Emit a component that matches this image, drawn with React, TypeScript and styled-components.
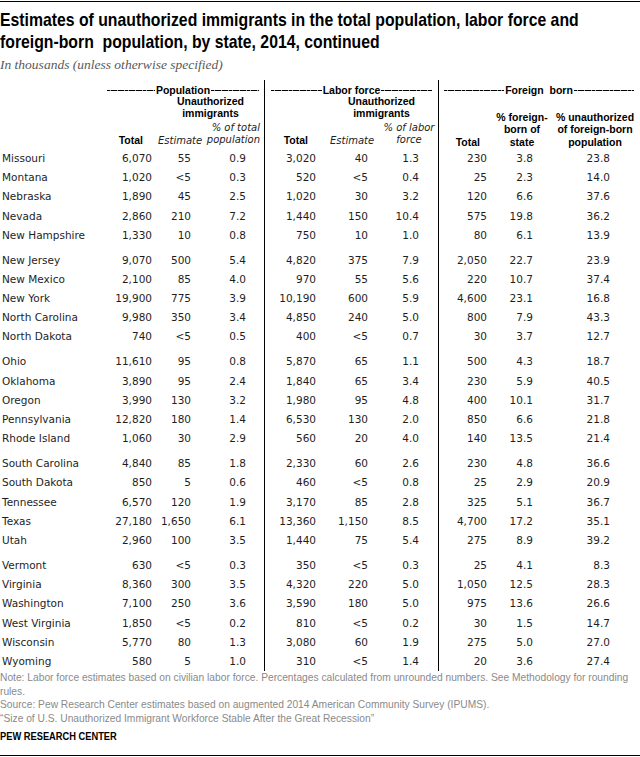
import React from 'react';
import styled, { createGlobalStyle } from 'styled-components';

const GlobalStyle = createGlobalStyle`
  html, body { margin: 0; padding: 0; background: #fff; }
  body { font-family: "DejaVu Sans", Verdana, sans-serif; }
`;

const COLS = '105px 47px 39px 73px 52px 52px 70px 49px 46px 107px';

type StateRow = { name: string; v: string[] };

const groups: StateRow[][] = [
  [
    { name: 'Missouri', v: ['6,070', '55', '0.9', '3,020', '40', '1.3', '230', '3.8', '23.8'] },
    { name: 'Montana', v: ['1,020', '<5', '0.3', '520', '<5', '0.4', '25', '2.3', '14.0'] },
    { name: 'Nebraska', v: ['1,890', '45', '2.5', '1,020', '30', '3.2', '120', '6.6', '37.6'] },
    { name: 'Nevada', v: ['2,860', '210', '7.2', '1,440', '150', '10.4', '575', '19.8', '36.2'] },
    { name: 'New Hampshire', v: ['1,330', '10', '0.8', '750', '10', '1.0', '80', '6.1', '13.9'] },
  ],
  [
    { name: 'New Jersey', v: ['9,070', '500', '5.4', '4,820', '375', '7.9', '2,050', '22.7', '23.9'] },
    { name: 'New Mexico', v: ['2,100', '85', '4.0', '970', '55', '5.6', '220', '10.7', '37.4'] },
    { name: 'New York', v: ['19,900', '775', '3.9', '10,190', '600', '5.9', '4,600', '23.1', '16.8'] },
    { name: 'North Carolina', v: ['9,980', '350', '3.4', '4,850', '240', '5.0', '800', '7.9', '43.3'] },
    { name: 'North Dakota', v: ['740', '<5', '0.5', '400', '<5', '0.7', '30', '3.7', '12.7'] },
  ],
  [
    { name: 'Ohio', v: ['11,610', '95', '0.8', '5,870', '65', '1.1', '500', '4.3', '18.7'] },
    { name: 'Oklahoma', v: ['3,890', '95', '2.4', '1,840', '65', '3.4', '230', '5.9', '40.5'] },
    { name: 'Oregon', v: ['3,990', '130', '3.2', '1,980', '95', '4.8', '400', '10.1', '31.7'] },
    { name: 'Pennsylvania', v: ['12,820', '180', '1.4', '6,530', '130', '2.0', '850', '6.6', '21.8'] },
    { name: 'Rhode Island', v: ['1,060', '30', '2.9', '560', '20', '4.0', '140', '13.5', '21.4'] },
  ],
  [
    { name: 'South Carolina', v: ['4,840', '85', '1.8', '2,330', '60', '2.6', '230', '4.8', '36.6'] },
    { name: 'South Dakota', v: ['850', '5', '0.6', '460', '<5', '0.8', '25', '2.9', '20.9'] },
    { name: 'Tennessee', v: ['6,570', '120', '1.9', '3,170', '85', '2.8', '325', '5.1', '36.7'] },
    { name: 'Texas', v: ['27,180', '1,650', '6.1', '13,360', '1,150', '8.5', '4,700', '17.2', '35.1'] },
    { name: 'Utah', v: ['2,960', '100', '3.5', '1,440', '75', '5.4', '275', '8.9', '39.2'] },
  ],
  [
    { name: 'Vermont', v: ['630', '<5', '0.3', '350', '<5', '0.3', '25', '4.1', '8.3'] },
    { name: 'Virginia', v: ['8,360', '300', '3.5', '4,320', '220', '5.0', '1,050', '12.5', '28.3'] },
    { name: 'Washington', v: ['7,100', '250', '3.6', '3,590', '180', '5.0', '975', '13.6', '26.6'] },
    { name: 'West Virginia', v: ['1,850', '<5', '0.2', '810', '<5', '0.2', '30', '1.5', '14.7'] },
    { name: 'Wisconsin', v: ['5,770', '80', '1.3', '3,080', '60', '1.9', '275', '5.0', '27.0'] },
    { name: 'Wyoming', v: ['580', '5', '1.0', '310', '<5', '1.4', '20', '3.6', '27.4'] },
  ],
];

// right padding for each numeric column (cols 2..10)
const NUM_PAD = [0, 0, 18, 0, 0, 19, 0, 0, 30];
const RULE_COLS = [3, 6];

const Page = styled.div`
  width: 640px;
  height: 757px;
  box-sizing: border-box;
  padding-top: 1px;
  display: flex;
  flex-direction: column;
  overflow: hidden;
  background: #fff;
`;

const Rule = styled.div<{ $bottom?: boolean }>`
  height: 1px;
  background: #000;
  flex: none;
  margin-top: ${(p) => (p.$bottom ? 'auto' : '0')};
  margin-bottom: ${(p) => (p.$bottom ? '1px' : '0')};
`;

const Title = styled.h1`
  margin: 7px 0 0 0;
  font-family: "Liberation Sans", Arial, sans-serif;
  font-weight: 700;
  font-size: 18.5px;
  line-height: 22px;
  color: #000;
`;

const Squeezed = styled.span<{ $scale: number }>`
  display: block;
  white-space: nowrap;
  transform-origin: left center;
  transform: scaleX(${(p) => p.$scale});
`;

const Subtitle = styled.p`
  margin: 4px 0 0 0;
  font-family: "Liberation Serif", "Times New Roman", serif;
  font-style: italic;
  font-size: 13.5px;
  line-height: 16px;
  color: #595959;
`;

const HeadGrid = styled.div`
  display: grid;
  grid-template-columns: ${COLS};
  grid-template-rows: 16px 23px 30px;
  margin-top: 7px;
`;

const HeadRule = styled.div<{ $col: number }>`
  grid-row: 1 / -1;
  grid-column: ${(p) => p.$col};
  border-left: 1px solid #000;
`;

const GroupHead = styled.div<{ $col: string; $pl: number; $pr: number }>`
  grid-row: 1;
  grid-column: ${(p) => p.$col};
  align-self: end;
  display: flex;
  align-items: center;
  padding: 0 ${(p) => p.$pr}px 0 ${(p) => p.$pl}px;
  font-family: "Liberation Sans", Arial, sans-serif;
  font-weight: 700;
  font-size: 10.5px;
  line-height: 12px;
  color: #000;
  white-space: nowrap;
`;

const Leader = styled.span`
  flex: 1;
  height: 1px;
  margin: 1px 1px 0;
  background: repeating-linear-gradient(to right, #000 0 3px, rgba(0, 0, 0, 0.35) 3px 3.6px);
`;

const HeadCell = styled.div<{
  $row: string;
  $col: string;
  $align: 'flex-start' | 'center' | 'flex-end';
  $pl?: number;
  $pr?: number;
  $pb?: number;
  $italic?: boolean;
  $lh?: number;
}>`
  grid-row: ${(p) => p.$row};
  grid-column: ${(p) => p.$col};
  display: flex;
  flex-direction: column;
  justify-content: flex-end;
  align-items: ${(p) => p.$align};
  padding: 0 ${(p) => p.$pr ?? 0}px ${(p) => p.$pb ?? 0}px ${(p) => p.$pl ?? 0}px;
  font-family: ${(p) => (p.$italic ? '"DejaVu Sans", Verdana, sans-serif' : '"Liberation Sans", Arial, sans-serif')};
  font-style: ${(p) => (p.$italic ? 'italic' : 'normal')};
  font-weight: ${(p) => (p.$italic ? 400 : 700)};
  font-size: ${(p) => (p.$italic ? '10px' : '10.5px')};
  line-height: ${(p) => p.$lh ?? 11.5}px;
  color: ${(p) => (p.$italic ? '#222' : '#000')};
  white-space: nowrap;
`;

const Body = styled.div`
  display: flex;
  flex-direction: column;
`;

const Row = styled.div<{ $first?: boolean }>`
  display: grid;
  grid-template-columns: ${COLS};
  & > * {
    padding-top: ${(p) => (p.$first ? '5.8px' : '0')};
  }
`;

const Cell = styled.div<{ $pr?: number; $rule?: boolean; $name?: boolean }>`
  height: 19.2px;
  line-height: 19.2px;
  font-family: "DejaVu Sans", Verdana, sans-serif;
  font-size: 10.5px;
  color: #1e1e1e;
  white-space: nowrap;
  text-align: ${(p) => (p.$name ? 'left' : 'right')};
  padding-left: ${(p) => (p.$name ? '2px' : '0')};
  padding-right: ${(p) => p.$pr ?? 0}px;
  border-left: ${(p) => (p.$rule ? '1px solid #000' : 'none')};
`;

const Footer = styled.div`
  margin-top: 0;
  font-family: "Liberation Sans", Arial, sans-serif;
  font-size: 11.5px;
  line-height: 13.5px;
  color: #8a8a8a;
`;

const Brand = styled.div`
  margin-top: 5px;
  font-family: "Liberation Sans", Arial, sans-serif;
  font-weight: 700;
  font-size: 10px;
  line-height: 14px;
  color: #000;
`;

export default function App() {
  return (
    <Page>
      <GlobalStyle />
      <Rule />
      <Title>
        <Squeezed $scale={0.853}>Estimates of unauthorized immigrants in the total population, labor force and</Squeezed>
        <Squeezed $scale={0.853}>foreign-born&nbsp; population, by state, 2014, continued</Squeezed>
      </Title>
      <Subtitle>In thousands (unless otherwise specified)</Subtitle>

      <HeadGrid>
        <HeadRule $col={5} />
        <HeadRule $col={8} />

        <GroupHead $col="2 / 5" $pl={1} $pr={4}>
          <Leader />
          <span>Population</span>
          <Leader />
        </GroupHead>
        <GroupHead $col="5 / 8" $pl={6} $pr={5}>
          <Leader />
          <span>Labor force</span>
          <Leader />
        </GroupHead>
        <GroupHead $col="8 / 11" $pl={5} $pr={5}>
          <Leader />
          <span>Foreign&nbsp; born</span>
          <Leader />
        </GroupHead>

        <HeadCell $row="2" $col="3 / 5" $align="center" $pl={5}>
          <span>Unauthorized</span>
          <span>immigrants</span>
        </HeadCell>
        <HeadCell $row="2" $col="6 / 8" $align="center" $pl={9}>
          <span>Unauthorized</span>
          <span>immigrants</span>
        </HeadCell>

        <HeadCell $row="3" $col="2" $align="flex-end" $pr={9} $pb={3}>
          <span>Total</span>
        </HeadCell>
        <HeadCell $row="3" $col="3" $align="flex-start" $pl={6} $pb={3} $italic>
          <span>Estimate</span>
        </HeadCell>
        <HeadCell $row="3" $col="4" $align="flex-end" $pr={4} $pb={3} $lh={11.8} $italic>
          <span>% of total</span>
          <span>population</span>
        </HeadCell>

        <HeadCell $row="3" $col="5" $align="flex-end" $pr={8} $pb={3}>
          <span>Total</span>
        </HeadCell>
        <HeadCell $row="3" $col="6" $align="flex-start" $pl={14} $pb={3} $italic>
          <span>Estimate</span>
        </HeadCell>
        <HeadCell $row="3" $col="7" $align="center" $pl={12} $pb={3} $lh={11.8} $italic>
          <span>% of labor</span>
          <span>force</span>
        </HeadCell>

        <HeadCell $row="3" $col="8" $align="flex-end" $pr={7} $pb={1} $lh={12.5}>
          <span>Total</span>
        </HeadCell>
        <HeadCell $row="2 / 4" $col="9" $align="center" $pl={24} $pb={1} $lh={12.5}>
          <span>% foreign-</span>
          <span>born of</span>
          <span>state</span>
        </HeadCell>
        <HeadCell $row="2 / 4" $col="10" $align="center" $pl={17} $pb={1} $lh={12.5}>
          <span>% unauthorized</span>
          <span>of foreign-born</span>
          <span>population</span>
        </HeadCell>
      </HeadGrid>

      <Body>
        {groups.map((g, gi) =>
          g.map((r, ri) => (
            <Row key={r.name} $first={gi > 0 && ri === 0}>
              <Cell $name>{r.name}</Cell>
              {r.v.map((val, vi) => (
                <Cell key={vi} $pr={NUM_PAD[vi]} $rule={RULE_COLS.includes(vi)}>
                  {val}
                </Cell>
              ))}
            </Row>
          ))
        )}
      </Body>

      <Footer>
        <Squeezed $scale={0.89}>
          Note: Labor force estimates based on civilian labor force. Percentages calculated from unrounded numbers. See Methodology for rounding
        </Squeezed>
        <Squeezed $scale={0.89}>rules.</Squeezed>
        <Squeezed $scale={0.89}>
          Source: Pew Research Center estimates based on augmented 2014 American Community Survey (IPUMS).
        </Squeezed>
        <Squeezed $scale={0.89}>
          “Size of U.S. Unauthorized Immigrant Workforce Stable After the Great Recession”
        </Squeezed>
      </Footer>
      <Brand>
        <Squeezed $scale={0.93}>PEW RESEARCH CENTER</Squeezed>
      </Brand>
      <Rule $bottom />
    </Page>
  );
}
